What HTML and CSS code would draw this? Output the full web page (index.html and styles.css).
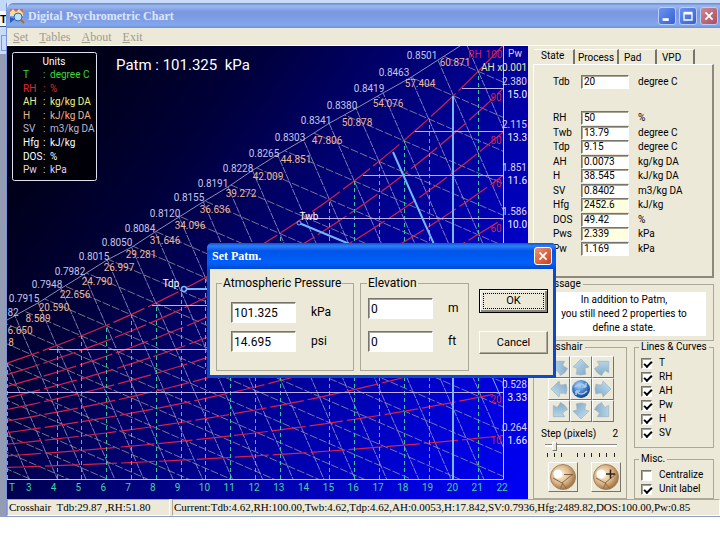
FILE: index.html
```html
<!DOCTYPE html>
<html lang="en">
<head>
<meta charset="utf-8">
<title>Digital Psychrometric Chart</title>
<link rel="stylesheet" href="styles.css">
</head>
<body>
<svg class="defs" aria-hidden="true">
  <defs>
    <linearGradient id="ice" x1="0" y1="0" x2="1" y2="1"><stop offset="0" stop-color="#c8e4f2"/><stop offset="1" stop-color="#7ca4c4"/></linearGradient>
    <radialGradient id="gold" cx="0.4" cy="0.4" r="0.65"><stop offset="0" stop-color="#fff4dc"/><stop offset="0.55" stop-color="#dcb88c"/><stop offset="1" stop-color="#94693c"/></radialGradient>
    <radialGradient id="globe" cx="0.4" cy="0.3" r="0.7"><stop offset="0" stop-color="#b4d8f8"/><stop offset="0.6" stop-color="#3c78c4"/><stop offset="1" stop-color="#14428c"/></radialGradient>
    <symbol id="arrow" viewBox="0 0 20 20"><path d="M10 2 L18 10 L14 11 Q14 15 15 17 Q10 19 5 17 Q6 15 6 11 L2 10 Z" fill="url(#ice)" stroke="#9cb4c4" stroke-width="0.7"/></symbol>
    <symbol id="ball" viewBox="0 0 28 28"><circle cx="14" cy="14" r="12.5" fill="url(#gold)" stroke="#a88458"/><path d="M4 15 L13 20 L18 26 M13 20 L24 11 M14 20 L11 26" fill="none" stroke="#8c6844" stroke-width="1"/><circle cx="9" cy="11" r="4.5" fill="#fff"/></symbol>
  </defs>
</svg>
<div class="desktop">
  <div class="behind" aria-hidden="true"><span>T</span><i></i></div>
  <div class="app">
    <header class="titlebar">
      <svg class="app-icon" viewBox="0 0 16 16" aria-hidden="true"><rect x="1" y="1" width="13" height="7" fill="#d8683c"/><path d="M1 4l3-3 3 3 3-3 4 4v3H1z" fill="#f4dca0"/><path d="M1 9l5 2-5 4z" fill="#285cb0"/><circle cx="9" cy="9" r="4" fill="#b8e4f8" stroke="#2c64b4"/><path d="M12 12l3 3" stroke="#b86c28" stroke-width="2"/></svg>
      <h1>Digital Psychrometric Chart</h1>
      <button class="win" aria-label="Minimize"><svg viewBox="0 0 18 18"><path d="M4 13h7" stroke="#fff" stroke-width="3"/></svg></button>
      <button class="win" aria-label="Maximize"><svg viewBox="0 0 18 18"><path d="M4.500 6.500h9v7h-9zM4 5h10" fill="none" stroke="#fff" stroke-width="1.500"/></svg></button>
      <button class="win shut" aria-label="Close"><svg viewBox="0 0 18 18"><path d="M5 5l8 8M13 5l-8 8" stroke="#fff" stroke-width="2"/></svg></button>
    </header>
    <nav class="menu"><a href="#"><u>S</u>et</a><a href="#"><u>T</u>ables</a><a href="#"><u>A</u>bout</a><a href="#"><u>E</u>xit</a></nav>
    <main class="main">
      <svg class="chart" id="chart" viewBox="7 46 521 453" preserveAspectRatio="none" role="img" aria-label="Psychrometric chart"></svg>
      <aside class="panel">
        <div class="tabs"><button class="tab on">State</button><button class="tab">Process</button><button class="tab">Pad</button><button class="tab">VPD</button></div>
        <form class="state">
          <div class="row first"><label for="tdb">Tdb</label><input id="tdb" value="20"><span>degree C</span></div>
          <div class="rows">
            <div class="row"><label for="rh">RH</label><input id="rh" value="50"><span>%</span></div>
            <div class="row"><label for="twb">Twb</label><input id="twb" value="13.79"><span>degree C</span></div>
            <div class="row"><label for="tdp">Tdp</label><input id="tdp" value="9.15"><span>degree C</span></div>
            <div class="row"><label for="ah">AH</label><input id="ah" value="0.0073"><span>kg/kg DA</span></div>
            <div class="row"><label for="h">H</label><input id="h" value="38.545"><span>kJ/kg DA</span></div>
            <div class="row"><label for="sv">SV</label><input id="sv" value="0.8402"><span>m3/kg DA</span></div>
            <div class="row"><label for="hfg">Hfg</label><input id="hfg" class="cream" value="2452.6"><span>kJ/kg</span></div>
            <div class="row"><label for="dos">DOS</label><input id="dos" value="49.42"><span>%</span></div>
            <div class="row"><label for="pws">Pws</label><input id="pws" class="cream" value="2.339"><span>kPa</span></div>
            <div class="row"><label for="pw">Pw</label><input id="pw" value="1.169"><span>kPa</span></div>
          </div>
        </form>
        <fieldset class="message"><legend>Message</legend><p>In addition to Patm,<br>you still need 2 properties to<br>define a state.</p></fieldset>
        <div class="lower">
          <fieldset class="cross"><legend>Crosshair</legend>
            <div class="pad">
              <button class="d315" aria-label="Up left"><svg><use href="#arrow"/></svg></button>
              <button aria-label="Up"><svg><use href="#arrow"/></svg></button>
              <button class="d45" aria-label="Up right"><svg><use href="#arrow"/></svg></button>
              <button class="d270" aria-label="Left"><svg><use href="#arrow"/></svg></button>
              <button aria-label="Center"><svg viewBox="0 0 20 20"><circle cx="10" cy="10" r="9" fill="url(#globe)"/><path d="M4 8 Q10 2 15 8 M15 8V4M15 8h-4M16 12 Q10 18 5 12 M5 12v4M5 12h4" fill="none" stroke="#a4ccf0" stroke-width="1.500"/></svg></button>
              <button class="d90" aria-label="Right"><svg><use href="#arrow"/></svg></button>
              <button class="d225" aria-label="Down left"><svg><use href="#arrow"/></svg></button>
              <button class="d180" aria-label="Down"><svg><use href="#arrow"/></svg></button>
              <button class="d135" aria-label="Down right"><svg><use href="#arrow"/></svg></button>
            </div>
            <div class="step"><label for="step">Step (pixels)</label><output>2</output></div>
            <input id="step" class="slider" type="range" min="1" max="10" value="2">
            <svg class="ticks" viewBox="0 0 72 4" aria-hidden="true"><path d="M2.500 0v4M9.500 0v4M16.500 0v4M32.500 0v4M39.500 0v4M46.500 0v4M54.500 0v4M61.500 0v4M69.500 0v4" stroke="#222"/></svg>
            <div class="balls"><button aria-label="Decrease"><svg viewBox="0 0 28 28"><use href="#ball"/><path d="M15 11.500h9" stroke="#806040"/></svg></button><button aria-label="Increase"><svg viewBox="0 0 28 28"><use href="#ball"/><path d="M14 11h9M18.500 6.500v9" stroke="#302010" stroke-width="1.500"/></svg></button></div>
          </fieldset>
          <div class="side">
            <fieldset class="checks lines"><legend>Lines &amp; Curves</legend>
              <label><input type="checkbox" checked>T</label><label><input type="checkbox" checked>RH</label><label><input type="checkbox" checked>AH</label><label><input type="checkbox" checked>Pw</label><label><input type="checkbox" checked>H</label><label><input type="checkbox" checked>SV</label>
            </fieldset>
            <fieldset class="checks"><legend>Misc.</legend>
              <label><input type="checkbox">Centralize</label><label><input type="checkbox" checked>Unit label</label>
            </fieldset>
          </div>
        </div>
      </aside>
    </main>
    <footer class="status"><span>Crosshair&nbsp; Tdb:29.87 ,RH:51.80</span><span>Current:Tdb:4.62,RH:100.00,Twb:4.62,Tdp:4.62,AH:0.0053,H:17.842,SV:0.7936,Hfg:2489.82,DOS:100.00,Pw:0.85</span></footer>
    <section class="dialog" role="dialog" aria-labelledby="dlg">
      <header><h2 id="dlg">Set Patm.</h2><button class="win shut" aria-label="Close dialog"><svg viewBox="0 0 18 18"><path d="M5 5l8 8M13 5l-8 8" stroke="#fff" stroke-width="2"/></svg></button></header>
      <form class="dialog-body">
        <fieldset class="pressure"><legend>Atmospheric Pressure</legend>
          <div><input id="kpa" value="101.325"><label for="kpa">kPa</label></div>
          <div><input id="psi" value="14.695"><label for="psi">psi</label></div>
        </fieldset>
        <fieldset class="elevation"><legend>Elevation</legend>
          <div><input id="em" value="0"><label for="em">m</label></div>
          <div><input id="eft" value="0"><label for="eft">ft</label></div>
        </fieldset>
        <div class="actions"><button type="button" class="ok"><span>OK</span></button><button type="button">Cancel</button></div>
      </form>
    </section>
  </div>
</div>
<script src="chart.js"></script>
</body>
</html>
```
FILE: styles.css
```css
* { box-sizing: border-box; }
body { margin: 0; background: #fff; color: #000; font: 10px/14px Roboto, sans-serif; overflow: hidden; }
button, input { font: inherit; color: inherit; margin: 0; padding: 0; border-radius: 0; }
h1, h2, p { margin: 0; }
.defs { position: absolute; width: 0; height: 0; }
.desktop { position: relative; padding: 3px 0 0 6px; background: #c8dcfa; }
.behind { position: absolute; left: 0; top: 0; bottom: 0; width: 7px; background: linear-gradient(#c4d8f8 11px, #f4f6fa 11px 26px, #3c5078 26px 27px, #c8dcfa 27px 54px, #949cb4 54px); overflow: hidden; }
.behind span { display: block; padding-top: 12px; font: bold 11px/14px "Liberation Sans", sans-serif; }
.behind i { display: block; height: 16px; margin: 9px 0 0 1px; border: 1px solid #7c9cd0; }
.app { position: relative; border-left: 1px solid #7c94dc; border-bottom: 1px solid #8c9cd0; background: #ece9d8; }
.titlebar { display: flex; align-items: center; gap: 3px; height: 25px; padding: 0 2px; background: linear-gradient(#6888cc, #9cb8f0 3px, #7a96e0 9px, #7e9ee6 16px, #84a8ec 22px, #6c90dc); border-top-left-radius: 6px; }
.app-icon { width: 16px; height: 16px; }
.titlebar h1 { flex: 1; font: bold 12px/16px "Liberation Serif", serif; color: #dce6fa; }
.win { width: 18px; height: 18px; border: 1px solid #b8ccf6; border-radius: 3px; background: linear-gradient(135deg, #6c94ee, #3460d4); }
.win.shut { background: linear-gradient(135deg, #cc8890, #a85064); }
.win svg { display: block; width: 16px; height: 16px; }
.menu { display: flex; gap: 11px; height: 18px; padding: 1px 6px; font: 12px/16px "Liberation Serif", serif; border-bottom: 1px solid #fff; }
.menu a { color: #a09c90; text-decoration: none; }
.main { display: flex; align-items: stretch; }
.chart { flex: 1; min-width: 0; display: block; aspect-ratio: 521 / 453; background: linear-gradient(125deg, #00000c 5%, #00003a 30%, #000088 56%, #0000d8 84%, #0000f8); font-size: 10px; }
.panel { flex: 0 0 192px; display: flex; flex-direction: column; padding: 3px 6px 0 5px; }
.tabs { display: flex; height: 15px; padding-left: 1px; }
.tab { width: 38px; border: 0; border-top: 1px solid #fff; border-right: 2px solid #77746a; background: #ece9d8; line-height: 12px; padding-top: 2px; text-align: left; padding-left: 5px; }
.tab.on { width: 41px; padding: 0 0 2px 7px; }
.tab:nth-child(2) { width: 44px; padding-left: 3px; }
.state { flex: 1; display: flex; flex-direction: column; padding: 10px 0 20px 19px; border: 1px solid #fff; border-right: 2px solid #8c897c; border-bottom: 2px solid #8c897c; }
.row { display: grid; grid-template-columns: 28px 48px 1fr; align-items: center; }
.row span { padding-left: 9px; white-space: nowrap; }
.row input { width: 100%; height: 14px; padding: 0 2px; }
.rows { flex: 1; display: grid; grid-auto-rows: 1fr; margin-top: 22px; }
input { border: 1px solid; border-color: #77746a #fff #fff #77746a; box-shadow: inset 1px 1px 0 #a8a498; background: #fff; outline: 0; }
.cream { background: #ffffe0; }
fieldset { min-width: 0; margin: 0; border: 1px solid #aca899; }
legend { padding: 0 2px; line-height: 12px; white-space: nowrap; }
.message { padding: 2px 7px 4px 8px; }
.message legend { margin-left: -4px; }
.message p { background: #fff; text-align: center; height: 44px; padding-top: 1px; line-height: 14px; white-space: nowrap; }
.lower { display: flex; gap: 7px; height: 158px; }
.cross { flex: 0 0 94px; padding: 3px 6px 4px 11px; }
.cross legend { margin-left: -7px; }
.pad { display: grid; grid-template-columns: repeat(3, 22px); grid-auto-rows: 22px; margin-left: 3px; }
.pad button, .balls button, .actions button { border: 1px solid; border-color: #fff #77746a #77746a #fff; background: #ece9d8; }
.pad svg { display: block; width: 20px; height: 20px; }
.d45 svg { transform: rotate(45deg); }
.d90 svg { transform: rotate(90deg); }
.d135 svg { transform: rotate(135deg); }
.d180 svg { transform: rotate(180deg); }
.d225 svg { transform: rotate(225deg); }
.d270 svg { transform: rotate(270deg); }
.d315 svg { transform: rotate(315deg); }
.step { display: flex; justify-content: space-between; margin: 5px 2px 0 -4px; white-space: nowrap; }
.slider { -webkit-appearance: none; appearance: none; display: block; width: 72px; height: 10px; border: 0; box-shadow: none; background: linear-gradient(transparent 3px, #8c897c 3px 4px, #fff 4px 6px, transparent 6px); }
.slider::-webkit-slider-thumb { -webkit-appearance: none; width: 5px; height: 9px; background: #ece9d8; border: 1px solid; border-color: #fff #77746a #77746a #fff; }
.ticks { display: block; width: 72px; height: 4px; margin-top: 2px; }
.balls { display: flex; gap: 13px; margin: 5px 0 0 3px; }
.balls button { width: 30px; height: 30px; flex: none; }
.balls svg { display: block; width: 28px; height: 28px; }
.side { flex: 1; min-width: 0; display: flex; flex-direction: column; justify-content: space-between; }
.checks { display: flex; flex-direction: column; padding: 3px 0 2px 6px; }
.lines { flex: 0 0 107px; }
.checks legend { margin-left: -2px; }
.checks label { display: flex; align-items: center; gap: 7px; height: 14px; white-space: nowrap; }
.checks input { -webkit-appearance: none; appearance: none; width: 11px; height: 11px; }
.checks input:checked::before { content: ""; display: block; width: 6px; height: 3px; margin: 2px 0 0 2px; border: 2px solid #000; border-width: 0 0 2px 2px; transform: rotate(-45deg); }
.status { display: flex; gap: 2px; height: 17px; font: 11px/15px "Liberation Serif", serif; white-space: nowrap; }
.status span { border: 1px solid; border-color: #aca899 #fff #fff #aca899; padding-left: 1px; }
.status span:first-child { flex: 0 0 163px; }
.status span:last-child { flex: 1; }
.dialog { position: absolute; left: 200px; top: 240px; width: 349px; background: #ece9d8; border: 3px solid #0c48c8; border-top: 0; border-radius: 5px 5px 0 0; font-size: 12px; line-height: 15px; }
.dialog header { display: flex; align-items: center; height: 26px; margin: 0 -3px; padding: 0 4px 0 5px; border-radius: 5px 5px 0 0; background: linear-gradient(#1450c0, #2c80fc 3px, #0054e8 8px, #0060fc 20px, #0448d0); }
.dialog h2 { flex: 1; font: bold 12px/16px "Liberation Serif", serif; color: #fff; }
.dialog .shut { background: linear-gradient(135deg, #f09070, #c8401c); border-color: #fff; }
.dialog-body { display: flex; padding: 6px 5px 4px 6px; }
.dialog fieldset { height: 96px; display: flex; flex-direction: column; }
.dialog legend { line-height: 16px; padding: 0 1px; }
.dialog fieldset div { display: flex; align-items: center; gap: 15px; }
.dialog fieldset input { width: 65px; height: 21px; padding: 0 2px; }
.pressure { width: 138px; padding: 11px 0 0 14px; gap: 8px; }
.pressure legend { margin-left: -9px; }
.elevation { width: 109px; margin-left: 6px; padding: 7px 0 0 7px; gap: 12px; }
.elevation legend { margin-left: -1px; }
.actions { flex: 1; display: flex; flex-direction: column; gap: 18px; padding: 14px 0 0 10px; font-size: 11px; }
.actions button { height: 23px; box-shadow: inset -1px -1px 0 #aca899; }
.actions .ok { height: 24px; border: 1px solid #000; box-shadow: inset 1px 1px 0 #fff, inset -2px -2px 0 #8c897c; padding: 3px; }
.ok span { display: block; border: 1px dotted #000; line-height: 14px; }
```
FILE: chart.js
```js
const NS = "http://www.w3.org/2000/svg";
const svg = document.getElementById("chart");
const px = t => 453.4 + (t - 20) * 24.8;
const py = p => 479 - p * 164.3;
const pws = t => 0.61094 * Math.exp(17.625 * t / (t + 243.04));

function add(tag, attrs, text, parent = svg) {
  const el = document.createElementNS(NS, tag);
  for (const k in attrs) el.setAttribute(k, attrs[k]);
  if (text !== undefined) el.textContent = text;
  parent.appendChild(el);
  return el;
}
function path(d, stroke, extra, parent) {
  add("path", Object.assign({ d, stroke, fill: "none", "stroke-width": 1 }, extra), undefined, parent);
}
function label(x, y, text, fill, extra) {
  add("text", Object.assign({ x, y: y + 4, fill, "text-anchor": "middle" }, extra), text);
}

// Upper-left limit of the enthalpy and volume lines
const limit = "7,320 38,303 60,289 83,275 107,260 132,247 155,232 179,217 203,202 228,187 253,170 277,155 303,140 328,124 355,109 383,93 410,78 438,60 460,46";
const clip = add("clipPath", { id: "region" });
add("polygon", { points: limit + " 503,46 503,479 7,479" }, undefined, clip);
const grid = add("g", { "clip-path": "url(#region)" });
add("polyline", { points: limit, fill: "none", stroke: "#8c8cb8" });

for (let t = -12; t <= 32; t++) {
  const x = px(t), y = py(pws(t));
  path(`M${x - 60} ${y - 138}L${x + 350} ${y + 805}`, "#9c9ccc", { "stroke-dasharray": "7 1", opacity: 0.8 }, grid);
  path(`M${x - 120} ${y - 52}L${x + 900} ${y + 391}`, "#a09c98", { "stroke-dasharray": "8 2", opacity: 0.75 }, grid);
}
for (let rh = 1; rh <= 10; rh++) {
  let d = "";
  for (let t = 2; t <= 22.01; t += 0.5) d += (d ? "L" : "M") + px(t).toFixed(1) + " " + py(pws(t) * rh / 10).toFixed(1);
  path(d, "#d82048", { "stroke-dasharray": "34 4", "stroke-width": 1.2 }, grid);
}
for (let t = 2; t <= 22; t++) {
  if (t === 3 || t === 14 || t === 20) continue;
  const x = Math.round(px(t)) + 0.5;
  path(`M${x} 479V${py(pws(t))}`, "#38c898", { "stroke-dasharray": "4 3" });
}
for (let n = 2; n <= 9; n++) {
  const p = n * 0.26445;
  let t = 2;
  while (pws(t) < p) t += 0.05;
  const y = Math.round(py(p)) + 0.5;
  path(`M${px(t)} ${y}H503`, "#c0b0f0");
}
path("M7 479.500H503.500M503.500 46V479", "#c8c8f0");

// State point with its wet-bulb, dew-point and volume lines
path("M453 96V479M299 223L453 287M183 289H453M393 152L453 287", "#74b8ff", { "stroke-width": 2 });
path("M453 287L500 395", "#74b8ff");
add("circle", { cx: 299, cy: 223, r: 2, fill: "#0000a0", stroke: "#74b8ff" });
add("circle", { cx: 184, cy: 289, r: 2.5, fill: "#000070", stroke: "#74b8ff", "stroke-width": 1.5 });

[[422,55,"0.8501"],[394,72,"0.8463"],[369,88,"0.8419"],[342,105,"0.8380"],[316,120,"0.8341"],[290,137,"0.8303"],[264,153,"0.8265"],[238,168,"0.8228"],[213,183,"0.8191"],[189,197,"0.8155"],[165,213,"0.8120"],[140,228,"0.8084"],[117,242,"0.8050"],[94,256,"0.8015"],[70,271,"0.7982"],[47,284,"0.7948"],[24,298,"0.7915"],[13,312,"82"]]
  .forEach(a => label(...a, "#c4c4e8"));
[[455,62,"60.871"],[420,83,"57.404"],[388,103,"54.076"],[357,122,"50.878"],[327,140,"47.806"],[296,159,"44.851"],[268,176,"42.009"],[241,193,"39.272"],[215,209,"36.636"],[190,225,"34.096"],[165,240,"31.646"],[141,254,"29.281"],[119,267,"26.997"],[97,281,"24.790"],[75,294,"22.656"],[54,307,"20.590"],[38,318,"8.589"],[20,330,"6.650"],[11,342,"8"]]
  .forEach(a => label(...a, "#ecb890"));

label(12, 487, "T", "#48d088");
for (let t = 3; t <= 22; t++) label(px(t) - (t < 10 ? 3 : 1), 487, t, "#48d0a0");
label(475, 54, "RH", "#d02050");
label(494, 54, "100", "#d02050");
[[97,90],[140,80],[183,70],[228,60],[399,20],[440,10]].forEach(a => label(496, a[0], a[1], "#d02050"));

label(515, 53, "Pw", "#dcd0f0");
add("text", { x: 481, y: 71, fill: "#e8e8a0" }, "AH x0.001");
[["2.380","15.0",81],["2.115","13.3",124],["1.851","11.6",167],["1.586","10.0",211],["0.528","3.33",384],["0.264","1.66",427]]
  .forEach(([pw, ah, y]) => {
    label(527, y, pw, "#dcd0f0", { "text-anchor": "end" });
    label(527, y + 13, ah, "#f0f0f8", { "text-anchor": "end" });
  });
label(309, 216, "Twb", "#fff");
label(171, 283, "Tdp", "#fff");
add("text", { x: 116, y: 70, fill: "#fff", "font-size": 15 }, "Patm : 101.325\u00a0 kPa");

add("rect", { x: 12.5, y: 52.5, width: 84, height: 128, rx: 2, fill: "#000008", stroke: "#e0e0f0" });
label(54, 61, "Units", "#fff");
[["T","degree C","#38d838"],["RH","%","#e02828"],["AH","kg/kg DA","#f0f080"],["H","kJ/kg DA","#f0b488"],["SV","m3/kg DA","#b8b8d8"],["Hfg","kJ/kg","#fff"],["DOS","%","#fff"],["Pw","kPa","#e4d0f4"]]
  .forEach(([k, u, c], i) => {
    const y = 78 + i * 13.6;
    add("text", { x: 23, y, fill: c }, k);
    add("text", { x: 43, y, fill: c }, ":");
    add("text", { x: 50, y, fill: c }, u);
  });
```
